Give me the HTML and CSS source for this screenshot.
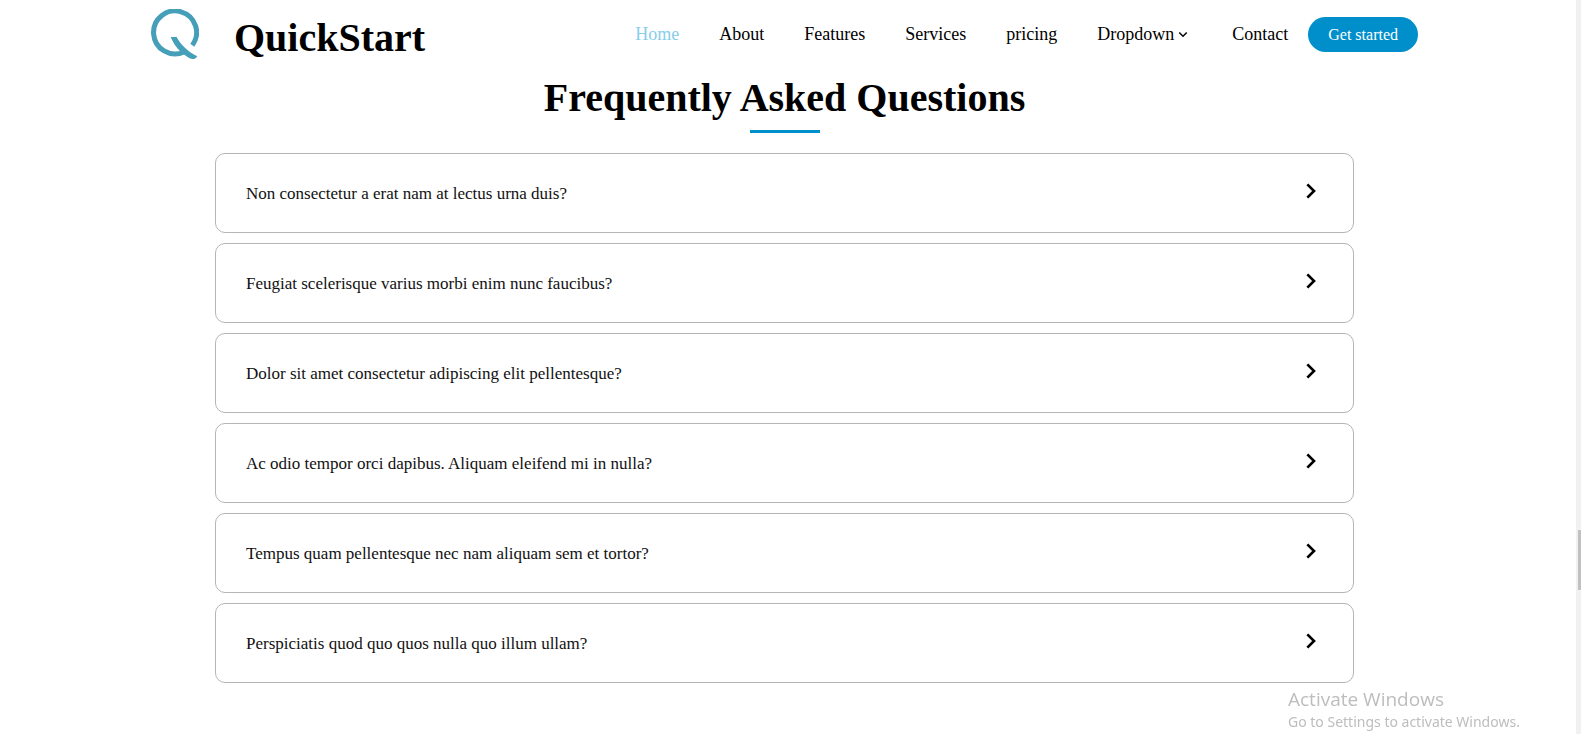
FILE: index.html
```html
<!DOCTYPE html>
<html lang="en">
<head>
<meta charset="utf-8">
<meta name="viewport" content="width=device-width, initial-scale=1">
<title>QuickStart</title>
<link rel="stylesheet" href="styles.css">
</head>
<body>
<svg class="sprite" aria-hidden="true">
  <symbol id="chevron-right" viewBox="0 0 24 24"><path d="M10.707 17.707 16.414 12l-5.707-5.707-1.414 1.414L13.586 12l-4.293 4.293z"/></symbol>
</svg>
<div class="page">
  <header class="header">
    <a class="brand" href="#">
      <svg class="brand-logo" viewBox="0 0 48 50" aria-hidden="true">
        <path d="M41.300 36.300A21.500 21.500 0 1 0 33 43" fill="none" stroke="#459fb9" stroke-width="5"/>
        <path d="M19.600 28h6C29 34.500 35.500 42 46.300 47.200 45 49.300 43.600 50 41.500 50 38.500 49.700 35 47.300 30.500 43.500 25.500 39 22 33.500 19.600 28z" fill="#459fb9"/>
      </svg>
      <span class="brand-name">QuickStart</span>
    </a>
    <div class="header-end">
      <nav class="nav">
        <a class="nav-link nav-link-active" href="#">Home</a>
        <a class="nav-link" href="#">About</a>
        <a class="nav-link" href="#">Features</a>
        <a class="nav-link" href="#">Services</a>
        <a class="nav-link" href="#">pricing</a>
        <a class="nav-link" href="#">Dropdown<svg class="nav-chevron" viewBox="0 0 24 24" aria-hidden="true"><path d="M16.293 9.293 12 13.586 7.707 9.293l-1.414 1.414L12 16.414l5.707-5.707z"/></svg></a>
        <a class="nav-link" href="#">Contact</a>
      </nav>
      <button class="cta" type="button">Get started</button>
    </div>
  </header>
  <main class="faq">
    <h1 class="faq-title">Frequently Asked Questions</h1>
    <div class="faq-list">
      <button class="faq-item" type="button"><span>Non consectetur a erat nam at lectus urna duis?</span><svg class="faq-chevron" aria-hidden="true"><use href="#chevron-right"/></svg></button>
      <button class="faq-item" type="button"><span>Feugiat scelerisque varius morbi enim nunc faucibus?</span><svg class="faq-chevron" aria-hidden="true"><use href="#chevron-right"/></svg></button>
      <button class="faq-item" type="button"><span>Dolor sit amet consectetur adipiscing elit pellentesque?</span><svg class="faq-chevron" aria-hidden="true"><use href="#chevron-right"/></svg></button>
      <button class="faq-item" type="button"><span>Ac odio tempor orci dapibus. Aliquam eleifend mi in nulla?</span><svg class="faq-chevron" aria-hidden="true"><use href="#chevron-right"/></svg></button>
      <button class="faq-item" type="button"><span>Tempus quam pellentesque nec nam aliquam sem et tortor?</span><svg class="faq-chevron" aria-hidden="true"><use href="#chevron-right"/></svg></button>
      <button class="faq-item" type="button"><span>Perspiciatis quod quo quos nulla quo illum ullam?</span><svg class="faq-chevron" aria-hidden="true"><use href="#chevron-right"/></svg></button>
    </div>
  </main>
</div>
<aside class="watermark">
  <p class="watermark-title">Activate Windows</p>
  <p class="watermark-text">Go to Settings to activate Windows.</p>
</aside>
<div class="scrollbar" aria-hidden="true"><div class="scrollbar-thumb"></div></div>
</body>
</html>
```

FILE: styles.css
```css
* {
  box-sizing: border-box;
}

body {
  margin: 0;
  background: #fff;
  color: #000;
  font-family: "Liberation Serif", "Times New Roman", serif;
  overflow: hidden;
}

.sprite {
  display: none;
}

.page {
  padding-right: 12px;
}

.header {
  display: flex;
  justify-content: space-between;
  align-items: flex-start;
  max-width: 1267px;
  margin: 0 auto;
  padding-top: 9px;
}

.brand {
  display: flex;
  align-items: flex-start;
  gap: 35px;
  color: inherit;
  text-decoration: none;
}

.brand-logo {
  width: 48px;
  height: 50px;
}

.brand-name {
  font-size: 40px;
  font-weight: 700;
  line-height: 58px;
}

.header-end {
  display: flex;
  align-items: flex-start;
  gap: 20px;
  padding-top: 8px;
}

.nav {
  display: flex;
  gap: 40px;
}

.nav-link {
  display: flex;
  align-items: center;
  color: #000;
  font-size: 18px;
  line-height: 34px;
  text-decoration: none;
}

.nav-link-active {
  color: #87ceeb;
}

.nav-chevron {
  width: 18px;
  height: 18px;
}

.cta {
  padding: 0 20px;
  border: 0;
  border-radius: 20px;
  background: #008fca;
  color: #fff;
  font-family: inherit;
  font-size: 16px;
  line-height: 35px;
}

.faq {
  max-width: 1139px;
  margin: 0 auto;
}

.faq-title {
  display: flex;
  flex-direction: column;
  align-items: center;
  gap: 9px;
  margin: 8px 0 20px;
  font-size: 40px;
  line-height: 46px;
}

.faq-title::after {
  content: "";
  width: 70px;
  height: 3px;
  background: #008fca;
}

.faq-list {
  display: grid;
  gap: 10px;
}

.faq-item {
  display: flex;
  justify-content: space-between;
  align-items: flex-start;
  width: 100%;
  padding: 21px 27px 19px 30px;
  border: 1px solid #b5b5b5;
  border-radius: 10px;
  background: #fff;
  color: #111;
  font-family: inherit;
  font-size: 17px;
  line-height: 38px;
  text-align: left;
}

.faq-chevron {
  width: 32px;
  height: 32px;
  fill: #000;
}

.watermark {
  position: fixed;
  right: 57px;
  bottom: 2px;
  width: 236px;
  color: #bdbdbd;
  font-family: "Open Sans", "Noto Sans", sans-serif;
  white-space: nowrap;
}

.watermark-title,
.watermark-text {
  margin: 0;
}

.watermark-title {
  font-size: 19px;
  line-height: 26px;
}

.watermark-text {
  font-family: "Noto Sans", sans-serif;
  font-size: 14px;
  line-height: 20px;
}

.scrollbar {
  position: fixed;
  inset: 0 0 0 auto;
  width: 5px;
  padding: 530px 0 0 2px;
  background: #f1f1f1;
}

.scrollbar-thumb {
  height: 60px;
  background: #c1c1c1;
}
```
